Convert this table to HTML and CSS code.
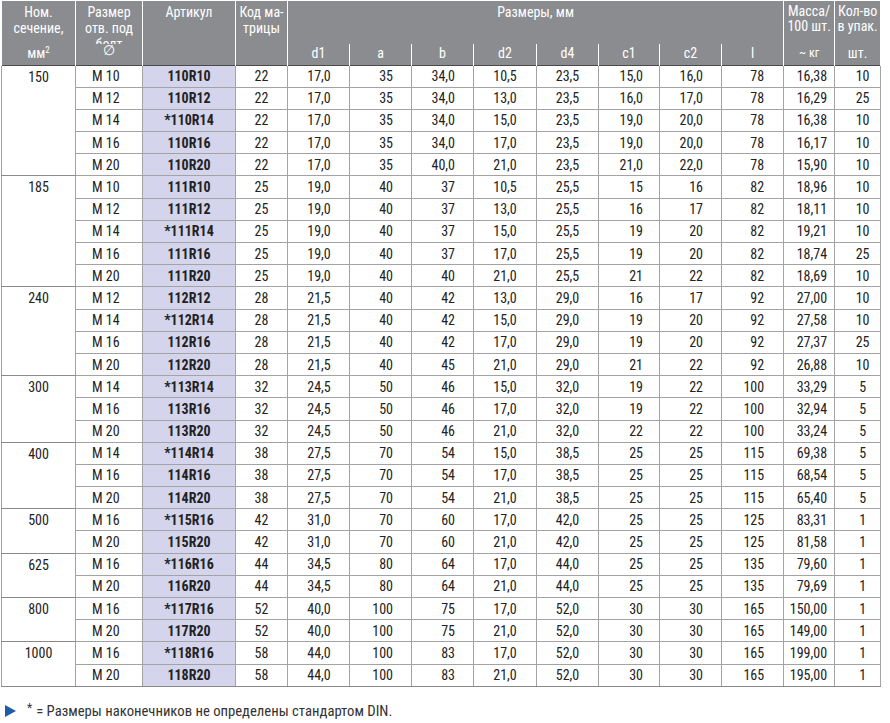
FILE: index.html
```html
<!DOCTYPE html>
<html lang="ru">
<head>
<meta charset="utf-8">
<title>Наконечники</title>
<link rel="stylesheet" href="styles.css">
</head>
<body>
<table class="spec">
<colgroup>
<col class="w74"><col class="w67"><col class="w93"><col class="w52">
<col class="w62"><col class="w62"><col class="w62"><col class="w63"><col class="w62"><col class="w61"><col class="w62"><col class="w62">
<col class="w51"><col class="w46">
</colgroup>
<thead>
<tr class="h1">
<th class="top">Ном.<br>сечение,</th>
<th class="top"><div class="clip">Размер<br>отв. под<br>болт</div></th>
<th class="top">Артикул</th>
<th class="top">Код ма-<br>трицы</th>
<th class="top" colspan="8">Размеры, мм</th>
<th class="top tight">Масса/<br>100 шт.</th>
<th class="top tight">Кол-во<br>в упак.</th>
</tr>
<tr class="h2">
<th class="cont">мм<sup>2</sup></th>
<th class="cont dia">∅</th>
<th class="cont"></th>
<th class="cont"></th>
<th class="sub first">d1</th>
<th class="sub">a</th>
<th class="sub">b</th>
<th class="sub">d2</th>
<th class="sub">d4</th>
<th class="sub">c1</th>
<th class="sub">c2</th>
<th class="sub">l</th>
<th class="cont small">~ кг</th>
<th class="cont">шт.</th>
</tr>
</thead>
<tbody>
<tr class="g"><td class="n" rowspan="5">150</td><td>M 10</td><td>110R10</td><td>22</td><td>17,0</td><td>35</td><td>34,0</td><td>10,5</td><td>23,5</td><td>15,0</td><td>16,0</td><td>78</td><td>16,38</td><td>10</td></tr>
<tr><td>M 12</td><td>110R12</td><td>22</td><td>17,0</td><td>35</td><td>34,0</td><td>13,0</td><td>23,5</td><td>16,0</td><td>17,0</td><td>78</td><td>16,29</td><td>25</td></tr>
<tr><td>M 14</td><td>*110R14</td><td>22</td><td>17,0</td><td>35</td><td>34,0</td><td>15,0</td><td>23,5</td><td>19,0</td><td>20,0</td><td>78</td><td>16,38</td><td>10</td></tr>
<tr><td>M 16</td><td>110R16</td><td>22</td><td>17,0</td><td>35</td><td>34,0</td><td>17,0</td><td>23,5</td><td>19,0</td><td>20,0</td><td>78</td><td>16,17</td><td>10</td></tr>
<tr><td>M 20</td><td>110R20</td><td>22</td><td>17,0</td><td>35</td><td>40,0</td><td>21,0</td><td>23,5</td><td>21,0</td><td>22,0</td><td>78</td><td>15,90</td><td>10</td></tr>

<tr class="g"><td class="n" rowspan="5">185</td><td>M 10</td><td>111R10</td><td>25</td><td>19,0</td><td>40</td><td>37</td><td>10,5</td><td>25,5</td><td>15</td><td>16</td><td>82</td><td>18,96</td><td>10</td></tr>
<tr><td>M 12</td><td>111R12</td><td>25</td><td>19,0</td><td>40</td><td>37</td><td>13,0</td><td>25,5</td><td>16</td><td>17</td><td>82</td><td>18,11</td><td>10</td></tr>
<tr><td>M 14</td><td>*111R14</td><td>25</td><td>19,0</td><td>40</td><td>37</td><td>15,0</td><td>25,5</td><td>19</td><td>20</td><td>82</td><td>19,21</td><td>10</td></tr>
<tr><td>M 16</td><td>111R16</td><td>25</td><td>19,0</td><td>40</td><td>37</td><td>17,0</td><td>25,5</td><td>19</td><td>20</td><td>82</td><td>18,74</td><td>25</td></tr>
<tr><td>M 20</td><td>111R20</td><td>25</td><td>19,0</td><td>40</td><td>40</td><td>21,0</td><td>25,5</td><td>21</td><td>22</td><td>82</td><td>18,69</td><td>10</td></tr>

<tr class="g"><td class="n" rowspan="4">240</td><td>M 12</td><td>112R12</td><td>28</td><td>21,5</td><td>40</td><td>42</td><td>13,0</td><td>29,0</td><td>16</td><td>17</td><td>92</td><td>27,00</td><td>10</td></tr>
<tr><td>M 14</td><td>*112R14</td><td>28</td><td>21,5</td><td>40</td><td>42</td><td>15,0</td><td>29,0</td><td>19</td><td>20</td><td>92</td><td>27,58</td><td>10</td></tr>
<tr><td>M 16</td><td>112R16</td><td>28</td><td>21,5</td><td>40</td><td>42</td><td>17,0</td><td>29,0</td><td>19</td><td>20</td><td>92</td><td>27,37</td><td>25</td></tr>
<tr><td>M 20</td><td>112R20</td><td>28</td><td>21,5</td><td>40</td><td>45</td><td>21,0</td><td>29,0</td><td>21</td><td>22</td><td>92</td><td>26,88</td><td>10</td></tr>

<tr class="g"><td class="n" rowspan="3">300</td><td>M 14</td><td>*113R14</td><td>32</td><td>24,5</td><td>50</td><td>46</td><td>15,0</td><td>32,0</td><td>19</td><td>22</td><td>100</td><td>33,29</td><td>5</td></tr>
<tr><td>M 16</td><td>113R16</td><td>32</td><td>24,5</td><td>50</td><td>46</td><td>17,0</td><td>32,0</td><td>19</td><td>22</td><td>100</td><td>32,94</td><td>5</td></tr>
<tr><td>M 20</td><td>113R20</td><td>32</td><td>24,5</td><td>50</td><td>46</td><td>21,0</td><td>32,0</td><td>22</td><td>22</td><td>100</td><td>33,24</td><td>5</td></tr>

<tr class="g"><td class="n" rowspan="3">400</td><td>M 14</td><td>*114R14</td><td>38</td><td>27,5</td><td>70</td><td>54</td><td>15,0</td><td>38,5</td><td>25</td><td>25</td><td>115</td><td>69,38</td><td>5</td></tr>
<tr><td>M 16</td><td>114R16</td><td>38</td><td>27,5</td><td>70</td><td>54</td><td>17,0</td><td>38,5</td><td>25</td><td>25</td><td>115</td><td>68,54</td><td>5</td></tr>
<tr><td>M 20</td><td>114R20</td><td>38</td><td>27,5</td><td>70</td><td>54</td><td>21,0</td><td>38,5</td><td>25</td><td>25</td><td>115</td><td>65,40</td><td>5</td></tr>

<tr class="g"><td class="n" rowspan="2">500</td><td>M 16</td><td>*115R16</td><td>42</td><td>31,0</td><td>70</td><td>60</td><td>17,0</td><td>42,0</td><td>25</td><td>25</td><td>125</td><td>83,31</td><td>1</td></tr>
<tr><td>M 20</td><td>115R20</td><td>42</td><td>31,0</td><td>70</td><td>60</td><td>21,0</td><td>42,0</td><td>25</td><td>25</td><td>125</td><td>81,58</td><td>1</td></tr>

<tr class="g"><td class="n" rowspan="2">625</td><td>M 16</td><td>*116R16</td><td>44</td><td>34,5</td><td>80</td><td>64</td><td>17,0</td><td>44,0</td><td>25</td><td>25</td><td>135</td><td>79,60</td><td>1</td></tr>
<tr><td>M 20</td><td>116R20</td><td>44</td><td>34,5</td><td>80</td><td>64</td><td>21,0</td><td>44,0</td><td>25</td><td>25</td><td>135</td><td>79,69</td><td>1</td></tr>

<tr class="g"><td class="n" rowspan="2">800</td><td>M 16</td><td>*117R16</td><td>52</td><td>40,0</td><td>100</td><td>75</td><td>17,0</td><td>52,0</td><td>30</td><td>30</td><td>165</td><td>150,00</td><td>1</td></tr>
<tr><td>M 20</td><td>117R20</td><td>52</td><td>40,0</td><td>100</td><td>75</td><td>21,0</td><td>52,0</td><td>30</td><td>30</td><td>165</td><td>149,00</td><td>1</td></tr>

<tr class="g"><td class="n" rowspan="2">1000</td><td>M 16</td><td>*118R16</td><td>58</td><td>44,0</td><td>100</td><td>83</td><td>17,0</td><td>52,0</td><td>30</td><td>30</td><td>165</td><td>199,00</td><td>1</td></tr>
<tr><td>M 20</td><td>118R20</td><td>58</td><td>44,0</td><td>100</td><td>83</td><td>21,0</td><td>52,0</td><td>30</td><td>30</td><td>165</td><td>195,00</td><td>1</td></tr>
</tbody>
</table>
<p class="note"><svg class="tri" width="11" height="12" viewBox="0 0 11 12"><polygon points="0,0 11,6 0,12" fill="#1f5ca8"/></svg><span class="ast">*</span> = Размеры наконечников не определены стандартом DIN.</p>
</body>
</html>
```
FILE: styles.css
```css
html, body {
  margin: 0;
  padding: 0;
  background: #fff;
}
body {
  font-family: "Roboto Condensed", Roboto, "Liberation Sans", sans-serif;
  font-stretch: condensed;
  font-size: 14px;
  color: #222;
}
.spec {
  border-collapse: collapse;
  table-layout: fixed;
  width: 879px;
  margin: 1px 0 0 1px;
}
.w74 { width: 74px; }
.w67 { width: 67px; }
.w93 { width: 93px; }
.w52 { width: 52px; }
.w62 { width: 62px; }
.w63 { width: 63px; }
.w61 { width: 61px; }
.w51 { width: 51px; }
.w46 { width: 46px; }

th {
  background: #8b8c90;
  color: #fff;
  font-weight: normal;
  text-align: center;
  padding: 0;
  border-left: 1px solid #fff;
  border-right: 1px solid #fff;
  line-height: 16px;
  overflow: hidden;
}
.h1 th {
  height: 43px;
  vertical-align: top;
  padding-top: 3px;
  box-sizing: border-box;
}
.h1 th.tight {
  line-height: 15px;
}
.clip {
  height: 40px;
  overflow: hidden;
}
.h2 th {
  height: 21px;
  vertical-align: top;
  padding-top: 1px;
  box-sizing: border-box;
}
.h2 th.dia {
  line-height: 12px;
  padding-top: 0;
}
.h2 th.small {
  font-size: 12px;
}
sup {
  font-size: 9px;
  line-height: 0;
  vertical-align: 5px;
}

td {
  padding: 0;
  height: 21.2px;
  line-height: 16px;
  border: 1px solid #a3a3a3;
  vertical-align: middle;
  white-space: nowrap;
  overflow: hidden;
}
tr.g td {
  border-top: 1px solid #4a4a4a;
}
tbody tr:last-child td,
td.n {
  border-bottom: 1px solid #8a8a8a;
}
td.n {
  text-align: center;
  vertical-align: top;
  padding-top: 3px;
}
td:nth-last-child(13) { text-align: left; padding-left: 16px; }
td:nth-last-child(12) { text-align: center; font-weight: bold; background: #d4d4ec; }
td:nth-last-child(11) { text-align: center; }
td:nth-last-child(10) { text-align: center; padding-left: 1px; }
td:nth-last-child(9)  { text-align: right; padding-right: 18px; }
td:nth-last-child(8)  { text-align: right; padding-right: 18px; }
td:nth-last-child(7)  { text-align: center; }
td:nth-last-child(6)  { text-align: center; }
td:nth-last-child(5)  { text-align: right; padding-right: 16px; }
td:nth-last-child(4)  { text-align: right; padding-right: 18px; }
td:nth-last-child(3)  { text-align: right; padding-right: 19px; }
td:nth-last-child(2)  { text-align: right; padding-right: 7px; }
td:nth-last-child(1)  { text-align: center; padding-left: 10px; }

.note {
  margin: 15px 0 0 0;
  padding-left: 5px;
  display: flex;
  align-items: center;
  font-size: 14.7px;
  line-height: 18px;
  color: #333;
}
.tri {
  margin-right: 11px;
}
.ast {
  position: relative;
  top: -3px;
  margin-right: 4px;
  font-size: 12px;
}
```
